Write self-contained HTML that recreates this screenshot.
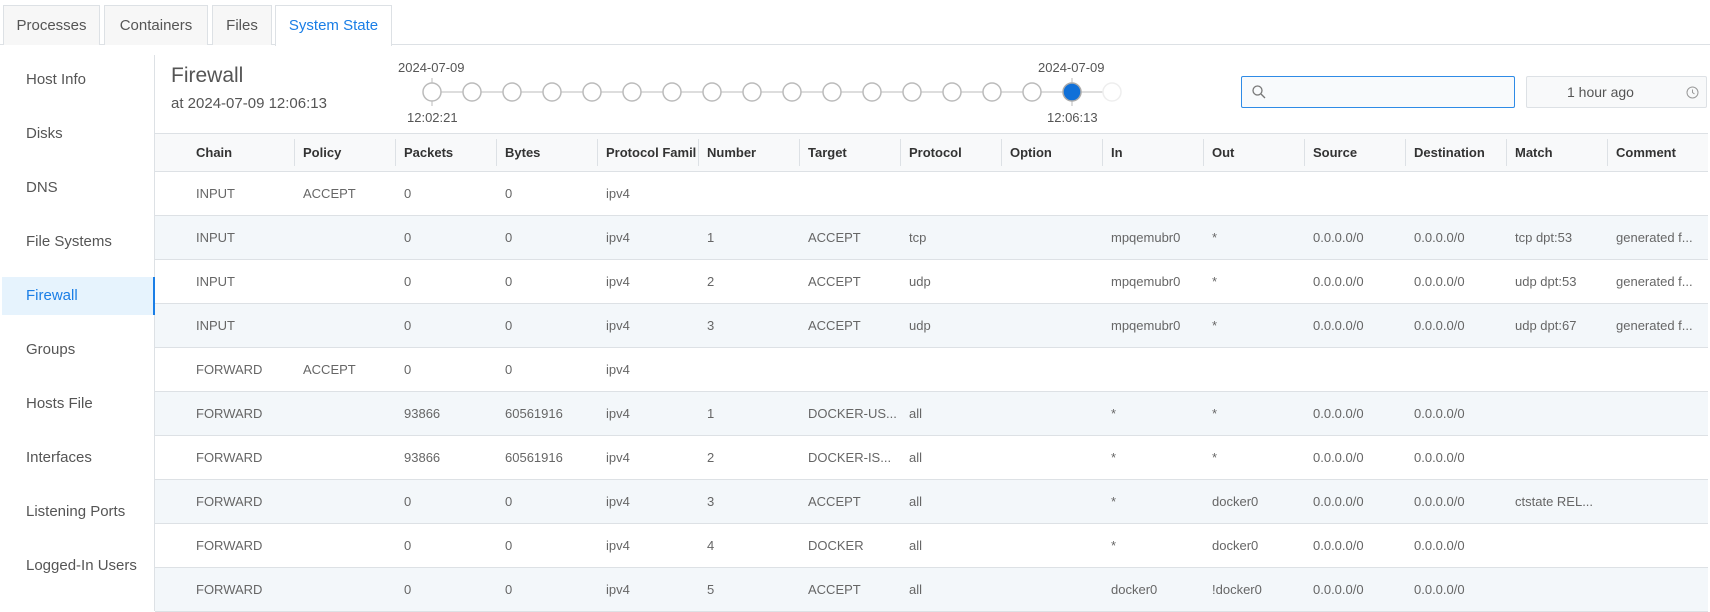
<!DOCTYPE html>
<html><head><meta charset="utf-8"><style>
*{box-sizing:border-box;margin:0;padding:0}
body{width:1710px;height:611px;overflow:hidden;background:#fff;font-family:"Liberation Sans","DejaVu Sans",sans-serif;color:#555;position:relative}
.tabbar{position:absolute;left:0;top:0;width:1710px;height:45px;border-bottom:1px solid #dde1e5}
.tab{position:absolute;top:5px;height:40px;background:#f7f7f7;border:1px solid #dde1e5;border-bottom:none;font-size:15px;color:#555;text-align:center;line-height:40px}
.tab.act{background:#fff;color:#1a7ee6;height:41px}
.side{position:absolute;left:0;top:55px;width:155px;height:556px;border-right:1px solid #dde1e5}
.si{position:absolute;left:2px;width:153px;height:38px;line-height:38px;padding-left:24px;font-size:15px;color:#555}
.si.act{background:#e6f3fd;color:#1a7ee6;border-right:2px solid #1a7ee6}
.title{position:absolute;left:171px;top:64px;font-size:21px;color:#555}
.sub{position:absolute;left:171px;top:95px;font-size:15px;color:#555}
.tl{position:absolute;font-size:13px;color:#555}
.search{position:absolute;left:1241px;top:76px;width:274px;height:32px;border:1px solid #2f8be6;border-radius:2px;background:#f8fafc}
.time{position:absolute;left:1526px;top:76px;width:181px;height:32px;border:1px solid #dde1e5;border-radius:2px;background:#f8f9fa;font-size:14px;color:#555;line-height:30px;padding-left:40px}
table{position:absolute;left:155px;top:133px;width:1552px;border-collapse:collapse;table-layout:fixed;font-size:13px}
th{height:38px;background:#f8f9fa;text-align:left;font-weight:bold;color:#333;padding-left:9px;border-top:1px solid #dde1e5;border-bottom:1px solid #dde1e5;position:relative;white-space:nowrap;overflow:hidden}
th+th:before{content:"";position:absolute;left:0;top:5px;bottom:5px;border-left:1px solid #dde1e5}
td{height:44px;padding-left:9px;color:#666;border-bottom:1px solid #dde1e5;white-space:nowrap;overflow:hidden;background:#fff}
th:first-child,td:first-child{padding-left:41px}
tr:nth-child(odd) td{background:#f3f7fa}
</style></head><body>
<div class="tabbar"></div>
<div class="tab" style="left:3px;width:97px">Processes</div>
<div class="tab" style="left:104px;width:104px">Containers</div>
<div class="tab" style="left:212px;width:60px">Files</div>
<div class="tab act" style="left:275px;width:117px">System State</div>
<div class="side">
<div class="si" style="top:6px">Host Info</div>
<div class="si" style="top:60px">Disks</div>
<div class="si" style="top:114px">DNS</div>
<div class="si" style="top:168px">File Systems</div>
<div class="si act" style="top:222px">Firewall</div>
<div class="si" style="top:276px">Groups</div>
<div class="si" style="top:330px">Hosts File</div>
<div class="si" style="top:384px">Interfaces</div>
<div class="si" style="top:438px">Listening Ports</div>
<div class="si" style="top:492px">Logged-In Users</div>
</div>
<div class="title">Firewall</div>
<div class="sub">at 2024-07-09 12:06:13</div>
<div class="tl" style="left:398px;top:60px">2024-07-09</div>
<div class="tl" style="left:407px;top:110px">12:02:21</div>
<div class="tl" style="left:1038px;top:60px">2024-07-09</div>
<div class="tl" style="left:1047px;top:110px">12:06:13</div>
<svg style="position:absolute;left:0;top:0" width="1200" height="130">
<line x1="432" y1="92" x2="1112" y2="92" stroke="#bbb" stroke-width="1"/>
<line x1="432" y1="78" x2="432" y2="106" stroke="#bbb"/>
<line x1="1072" y1="78" x2="1072" y2="106" stroke="#bbb"/>
<g fill="#fff" stroke="#bbb" stroke-width="1.5">
<circle cx="432" cy="92" r="9"/><circle cx="472" cy="92" r="9"/><circle cx="512" cy="92" r="9"/><circle cx="552" cy="92" r="9"/><circle cx="592" cy="92" r="9"/><circle cx="632" cy="92" r="9"/><circle cx="672" cy="92" r="9"/><circle cx="712" cy="92" r="9"/><circle cx="752" cy="92" r="9"/><circle cx="792" cy="92" r="9"/><circle cx="832" cy="92" r="9"/><circle cx="872" cy="92" r="9"/><circle cx="912" cy="92" r="9"/><circle cx="952" cy="92" r="9"/><circle cx="992" cy="92" r="9"/><circle cx="1032" cy="92" r="9"/>
</g>
<circle cx="1072" cy="92" r="9" fill="#1070d8" stroke="#aaa" stroke-width="1.5"/>
<circle cx="1112" cy="92" r="9" fill="#fff" stroke="#eee" stroke-width="1.5"/>
</svg>
<div class="search"><svg style="position:absolute;left:10px;top:8px" width="14" height="14"><circle cx="5.5" cy="5.5" r="4.5" fill="none" stroke="#777" stroke-width="1.3"/><line x1="9" y1="9" x2="13" y2="13" stroke="#777" stroke-width="1.3"/></svg></div>
<div class="time">1 hour ago<svg style="position:absolute;right:7px;top:9px" width="13" height="13"><circle cx="6.5" cy="6.5" r="5.5" fill="none" stroke="#999"/><path d="M6.5 3.5V6.5L8.5 8" fill="none" stroke="#999"/></svg></div>
<table>
<colgroup><col style="width:139px"><col span="14" style="width:101px"></colgroup>
<tr><th>Chain</th><th>Policy</th><th>Packets</th><th>Bytes</th><th>Protocol Famil</th><th>Number</th><th>Target</th><th>Protocol</th><th>Option</th><th>In</th><th>Out</th><th>Source</th><th>Destination</th><th>Match</th><th>Comment</th></tr>
<tr><td>INPUT</td><td>ACCEPT</td><td>0</td><td>0</td><td>ipv4</td><td></td><td></td><td></td><td></td><td></td><td></td><td></td><td></td><td></td><td></td></tr>
<tr><td>INPUT</td><td></td><td>0</td><td>0</td><td>ipv4</td><td>1</td><td>ACCEPT</td><td>tcp</td><td></td><td>mpqemubr0</td><td>*</td><td>0.0.0.0/0</td><td>0.0.0.0/0</td><td>tcp dpt:53</td><td>generated f...</td></tr>
<tr><td>INPUT</td><td></td><td>0</td><td>0</td><td>ipv4</td><td>2</td><td>ACCEPT</td><td>udp</td><td></td><td>mpqemubr0</td><td>*</td><td>0.0.0.0/0</td><td>0.0.0.0/0</td><td>udp dpt:53</td><td>generated f...</td></tr>
<tr><td>INPUT</td><td></td><td>0</td><td>0</td><td>ipv4</td><td>3</td><td>ACCEPT</td><td>udp</td><td></td><td>mpqemubr0</td><td>*</td><td>0.0.0.0/0</td><td>0.0.0.0/0</td><td>udp dpt:67</td><td>generated f...</td></tr>
<tr><td>FORWARD</td><td>ACCEPT</td><td>0</td><td>0</td><td>ipv4</td><td></td><td></td><td></td><td></td><td></td><td></td><td></td><td></td><td></td><td></td></tr>
<tr><td>FORWARD</td><td></td><td>93866</td><td>60561916</td><td>ipv4</td><td>1</td><td>DOCKER-US...</td><td>all</td><td></td><td>*</td><td>*</td><td>0.0.0.0/0</td><td>0.0.0.0/0</td><td></td><td></td></tr>
<tr><td>FORWARD</td><td></td><td>93866</td><td>60561916</td><td>ipv4</td><td>2</td><td>DOCKER-IS...</td><td>all</td><td></td><td>*</td><td>*</td><td>0.0.0.0/0</td><td>0.0.0.0/0</td><td></td><td></td></tr>
<tr><td>FORWARD</td><td></td><td>0</td><td>0</td><td>ipv4</td><td>3</td><td>ACCEPT</td><td>all</td><td></td><td>*</td><td>docker0</td><td>0.0.0.0/0</td><td>0.0.0.0/0</td><td>ctstate REL...</td><td></td></tr>
<tr><td>FORWARD</td><td></td><td>0</td><td>0</td><td>ipv4</td><td>4</td><td>DOCKER</td><td>all</td><td></td><td>*</td><td>docker0</td><td>0.0.0.0/0</td><td>0.0.0.0/0</td><td></td><td></td></tr>
<tr><td>FORWARD</td><td></td><td>0</td><td>0</td><td>ipv4</td><td>5</td><td>ACCEPT</td><td>all</td><td></td><td>docker0</td><td>!docker0</td><td>0.0.0.0/0</td><td>0.0.0.0/0</td><td></td><td></td></tr>
</table>
</body></html>
